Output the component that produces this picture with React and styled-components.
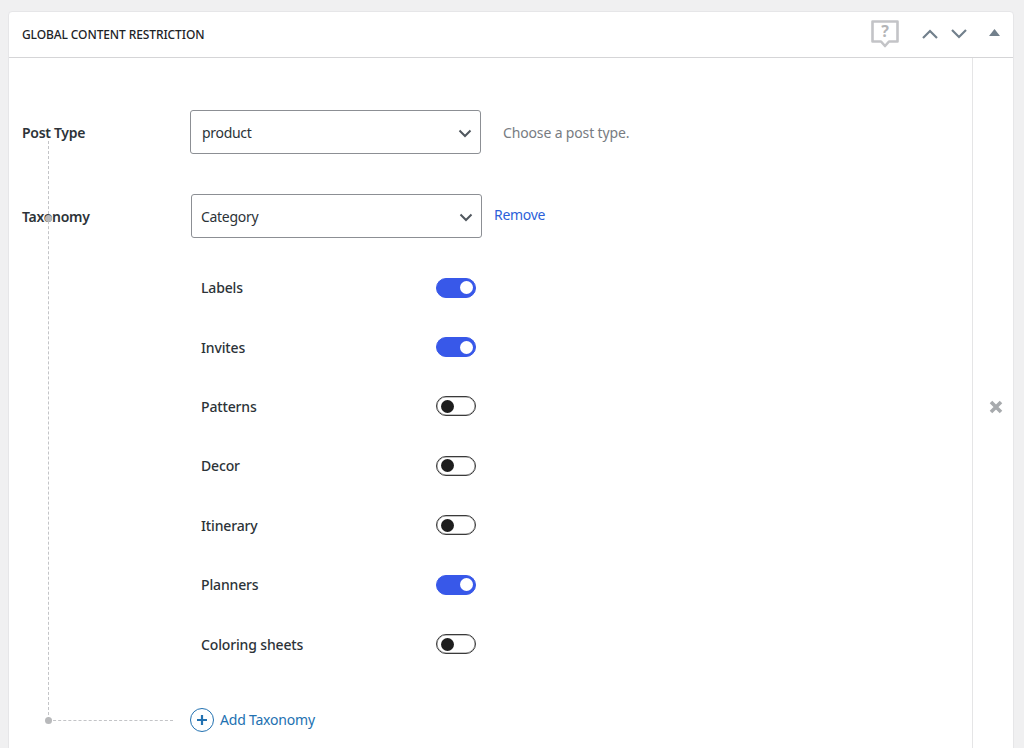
import React from 'react';
import styled, { createGlobalStyle } from 'styled-components';

const taxonomies = [
  { name: 'Labels', on: true },
  { name: 'Invites', on: true },
  { name: 'Patterns', on: false },
  { name: 'Decor', on: false },
  { name: 'Itinerary', on: false },
  { name: 'Planners', on: true },
  { name: 'Coloring sheets', on: false },
];

const Chevron = ({ up }) => (
  <svg width="16" height="10" viewBox="0 0 16 10" fill="none">
    <path d={up ? 'M1 9l7-7 7 7' : 'M1 1l7 7 7-7'} stroke="#72808c" strokeWidth="2.2" />
  </svg>
);

const SelectBox = ({ value, options, shift }) => (
  <SelectWrap $shift={shift}>
    <StyledSelect $shift={shift} defaultValue={value}>
      {options.map((o) => (
        <option key={o} value={o}>{o}</option>
      ))}
    </StyledSelect>
    <SelectArrow width="14" height="9" viewBox="0 0 14 9" fill="none">
      <path d="M1.5 1.5L7 7l5.5-5.5" stroke="#50575e" strokeWidth="2" />
    </SelectArrow>
  </SelectWrap>
);

export default function App() {
  return (
    <>
      <GlobalStyle />
      <Card>
        <Header>
          <Title>Global Content Restriction</Title>
          <HeaderActions>
            <HelpIcon>
              <svg width="28" height="28" viewBox="0 0 28 28" fill="none">
                <path d="M1.5 1.5h25v20H18l-4 4.5-4-4.5H1.5z" stroke="#c3c4c7" strokeWidth="2.6" strokeLinejoin="round" />
              </svg>
              <HelpMark>?</HelpMark>
            </HelpIcon>
            <Chevron up />
            <Chevron />
            <Collapse width="11" height="7" viewBox="0 0 11 7">
              <path d="M5.5 0l5.5 7H0z" fill="#72808c" />
            </Collapse>
          </HeaderActions>
        </Header>
        <Body>
          <Main>
            <TreeLine />
            <TreeBranch />
            <TreeDot $top={160} />
            <TreeDot $top={662} />
            <Row>
              <RowLabel>Post Type</RowLabel>
              <SelectBox value="product" options={['product', 'post', 'page']} />
              <Hint>Choose a post type.</Hint>
            </Row>
            <TaxonomyRow>
              <RowLabel>Taxonomy</RowLabel>
              <SelectBox value="Category" options={['Category', 'Tag']} shift />
              <RemoveLink href="#">Remove</RemoveLink>
            </TaxonomyRow>
            <TermList>
              {taxonomies.map((t) => (
                <Term key={t.name}>
                  <TermName>{t.name}</TermName>
                  <Toggle $on={t.on} />
                </Term>
              ))}
            </TermList>
            <AddRow>
              <AddIcon>
                <svg width="14" height="14" viewBox="0 0 14 14">
                  <path d="M7 2v10M2 7h10" stroke="#2271b1" strokeWidth="2.2" />
                </svg>
              </AddIcon>
              Add Taxonomy
            </AddRow>
          </Main>
          <Side>
            <svg width="14" height="14" viewBox="0 0 14 14">
              <path d="M2 2l10 10M12 2L2 12" stroke="#a7aaad" strokeWidth="3.6" />
            </svg>
          </Side>
        </Body>
      </Card>
    </>
  );
}

const GlobalStyle = createGlobalStyle`
  html, body {
    margin: 0;
    height: 748px;
    overflow: hidden;
    background: #f0f0f1;
    font-family: "Noto Sans", "Open Sans", sans-serif;
    font-size: 14px;
    color: #2c3338;
  }
`;
const Card = styled.div`
  margin: 11px 10px 0 8px;
  height: 760px;
  background: #fff;
  border: 1px solid #e6e6e8;
  border-radius: 4px;
  box-sizing: border-box;
  display: flex;
  flex-direction: column;
`;
const Header = styled.div`
  height: 46px;
  flex: none;
  box-sizing: border-box;
  border-bottom: 1px solid #d5d5d7;
  padding: 0 13px 2px 13px;
  display: flex;
  align-items: center;
  justify-content: space-between;
`;
const Title = styled.div`
  margin-top: 2px;
  font-size: 12px;
  font-weight: 500;
  letter-spacing: -0.1px;
  text-transform: uppercase;
  color: #1d2327;
`;
const HeaderActions = styled.div`
  display: flex;
  align-items: center;
  gap: 13px;
`;
const HelpIcon = styled.div`
  position: relative;
  width: 28px;
  height: 28px;
  margin-right: 10px;
`;
const HelpMark = styled.span`
  position: absolute;
  left: 0;
  right: 0;
  top: 2px;
  text-align: center;
  font-size: 16px;
  font-weight: 700;
  line-height: 18px;
  color: #b4b5b8;
`;
const Collapse = styled.svg`
  margin: 0 0 3px 9px;
`;
const Body = styled.div`
  flex: 1;
  display: flex;
`;
const Main = styled.div`
  position: relative;
  flex: 1;
  padding: 52px 0 0 13px;
`;
const Side = styled.div`
  width: 41px;
  flex: none;
  border-left: 1px solid #e5e5e6;
  height: 700px;
  display: flex;
  align-items: center;
  justify-content: center;
  padding: 0 0 2px 5px;
  box-sizing: border-box;
`;
const Row = styled.div`
  display: flex;
  align-items: center;
  height: 44px;
`;
const TaxonomyRow = styled(Row)`
  margin-top: 40px;
`;
const RowLabel = styled.div`
  width: 168px;
  flex: none;
  font-weight: 600;
  letter-spacing: -0.3px;
  color: #2c3338;
`;
const SelectWrap = styled.div`
  position: relative;
  width: 291px;
  height: 44px;
  flex: none;
  margin-left: ${(p) => (p.$shift ? '1px' : '0')};
`;
const StyledSelect = styled.select`
  width: 100%;
  height: 100%;
  box-sizing: border-box;
  appearance: none;
  background: #fff;
  border: 1px solid #8c8f94;
  border-radius: 3px;
  padding: 0 32px 0 ${(p) => (p.$shift ? '9px' : '11px')};
  font: inherit;
  letter-spacing: -0.3px;
  color: #2c3338;
`;
const SelectArrow = styled.svg`
  position: absolute;
  right: 9px;
  top: 19px;
  pointer-events: none;
`;
const Hint = styled.div`
  margin-left: 22px;
  letter-spacing: -0.15px;
  color: #787c82;
`;
const RemoveLink = styled.a`
  margin: -4px 0 0 12px;
  color: #2c5fd9;
  text-decoration: none;
  letter-spacing: -0.3px;
`;
const TermList = styled.div`
  margin: 20px 0 0 179px;
  width: 275px;
`;
const Term = styled.div`
  height: 59.4px;
  display: flex;
  align-items: center;
  justify-content: space-between;
`;
const TermName = styled.span`
  font-weight: 500;
  letter-spacing: -0.15px;
  color: #2c3338;
`;
const Toggle = styled.span`
  position: relative;
  width: 40px;
  height: 20px;
  box-sizing: border-box;
  border-radius: 10px;
  border: 1px solid ${(p) => (p.$on ? '#3858e9' : '#3a3a3a')};
  background: ${(p) => (p.$on ? '#3858e9' : '#fff')};
  box-shadow: ${(p) => (p.$on ? 'none' : 'inset 0 0 0 0.5px #8a8a8a')};
  &::after {
    content: '';
    position: absolute;
    top: 2.5px;
    left: ${(p) => (p.$on ? '22.5px' : '3.5px')};
    width: 13px;
    height: 13px;
    border-radius: 50%;
    background: ${(p) => (p.$on ? '#fff' : '#1e1e1e')};
  }
`;
const AddRow = styled.div`
  display: flex;
  align-items: center;
  gap: 6px;
  margin: 34px 0 0 168px;
  color: #2271b1;
  letter-spacing: -0.2px;
`;
const AddIcon = styled.span`
  width: 24px;
  height: 24px;
  box-sizing: border-box;
  border: 1px solid #2271b1;
  border-radius: 50%;
  display: flex;
  align-items: center;
  justify-content: center;
`;
const TreeLine = styled.div`
  position: absolute;
  left: 39px;
  top: 83px;
  height: 579px;
  border-left: 1px dashed #c3c4c7;
`;
const TreeBranch = styled.div`
  position: absolute;
  left: 39px;
  top: 662px;
  width: 125px;
  border-top: 1px dashed #c3c4c7;
`;
const TreeDot = styled.div`
  position: absolute;
  left: 36px;
  top: ${(p) => p.$top - 3}px;
  width: 7px;
  height: 7px;
  border-radius: 50%;
  background: #b8b9bb;
`;
